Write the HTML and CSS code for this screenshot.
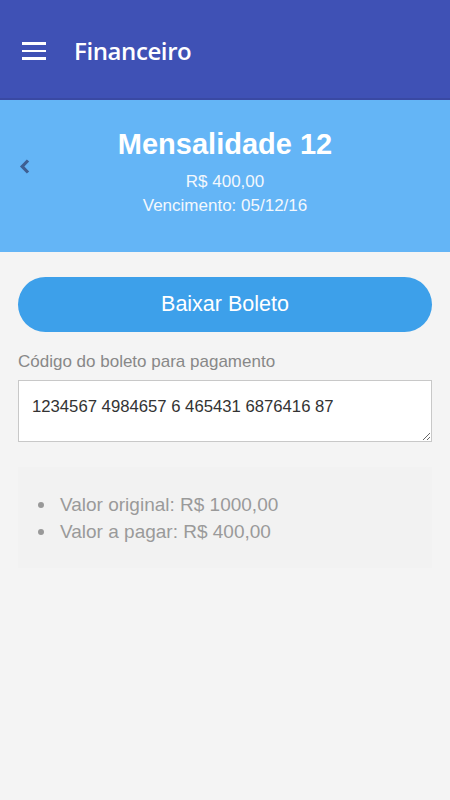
FILE: index.html
```html
<!DOCTYPE html>
<html lang="pt-BR">
<head>
<meta charset="utf-8">
<title>Financeiro</title>
<link rel="stylesheet" href="styles.css">
</head>
<body>
<div class="topbar">
   <span class="menu"><i></i><i></i><i></i></span>
   <span class="topbar-title">Financeiro</span>
</div>
<div class="hero">
   <a class="back" href="#"><svg width="12" height="15" viewBox="0 0 12 15"><path d="M9 1.5 L3.2 7.5 L9 13.5" fill="none" stroke="currentColor" stroke-width="3.2"/></svg></a>
   <h1>Mensalidade 12</h1>
   <div class="hero-line">R$ 400,00</div>
   <div class="hero-line">Vencimento: 05/12/16</div>
</div>
<div class="content">
   <button class="btn">Baixar Boleto</button>
   <label class="lbl" for="codigo">Código do boleto para pagamento</label>
   <textarea id="codigo" class="code">1234567 4984657 6 465431 6876416 87</textarea>
   <div class="info">
      <ul>
         <li>Valor original: R$ 1000,00</li>
         <li>Valor a pagar: R$ 400,00</li>
      </ul>
   </div>
</div>
</body>
</html>
```

FILE: styles.css
```css
body {margin:0;background:#f4f4f4;font-family:"Liberation Sans",Arial,sans-serif;}
.topbar {height:100px;box-sizing:border-box;background:#3f51b5;border-bottom:2px solid #3949a3;display:flex;align-items:center;padding:4px 0 0 22px;}
.menu {width:24px;display:flex;flex-direction:column;gap:5px;}
.menu i {display:block;height:2.5px;background:#fff;}
.topbar-title {color:#fff;font-family:"Open Sans",sans-serif;font-weight:600;font-size:24px;margin-left:28px;margin-top:-2px;letter-spacing:-0.4px;}
.hero {position:relative;background:#64b5f6;height:152px;text-align:center;color:#fff;padding-top:27px;box-sizing:border-box;}
.hero h1 {margin:0 0 9px 0;font-size:29px;line-height:34px;font-weight:bold;}
.hero-line {font-size:17px;line-height:24px;color:#f3f8fd;}
.back {position:absolute;left:19px;top:59px;color:#3e5f92;}
.content {padding:25px 18px;}
.btn {display:block;width:100%;height:55px;border:0;border-radius:28px;background:#3da0ea;color:#fff;font-family:"Liberation Sans",Arial,sans-serif;font-size:21.5px;cursor:pointer;}
.lbl {display:block;color:#888;font-size:17px;margin-top:20px;line-height:20px;}
.code {display:block;width:100%;height:62px;box-sizing:border-box;margin-top:8px;border:1px solid #c8c8c8;background:#fff;color:#333;font-family:"Liberation Sans",Arial,sans-serif;font-size:16.7px;padding:16px 13px 10px;resize:vertical;}
.info {background:#f2f2f2;margin-top:25px;height:101px;padding:24px 0 0 0;box-sizing:border-box;}
.info ul {margin:0;padding:0;list-style:none;color:#9a9a9a;font-size:19px;line-height:27px;}
.info li {display:flex;align-items:center;}
.info li::before {content:"";width:6px;height:6px;border-radius:50%;background:#999;margin:0 16px 0 20px;}
```
